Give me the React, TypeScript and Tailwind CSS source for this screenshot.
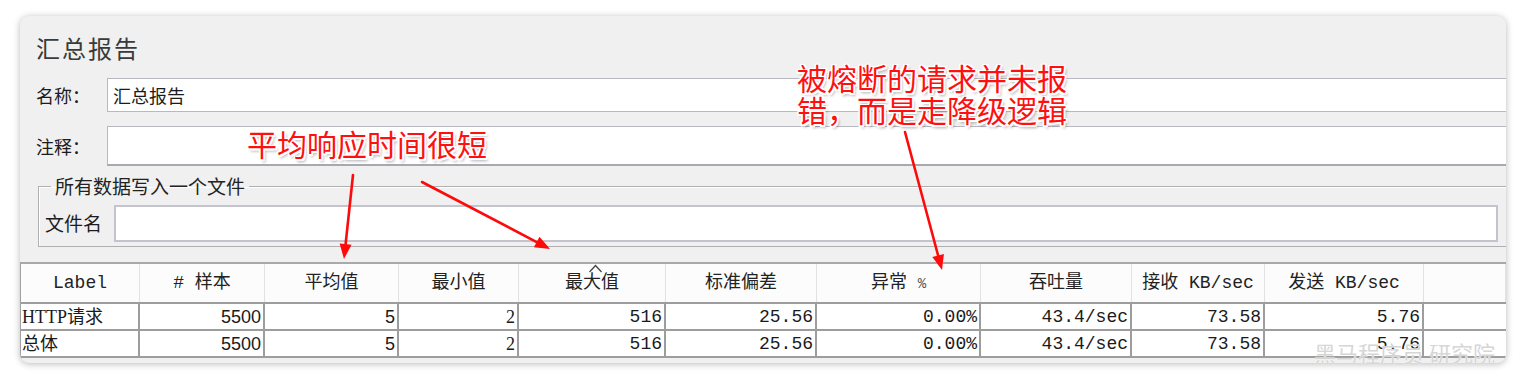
import React from "react";

type Pt = [number, number];

function Arrow({ from, to }: { from: Pt; to: Pt }) {
  const [x1, y1] = from;
  const [x2, y2] = to;
  const dx = x2 - x1;
  const dy = y2 - y1;
  const len = Math.sqrt(dx * dx + dy * dy);
  const ux = dx / len;
  const uy = dy / len;
  const hl = 15;
  const hw = 6;
  const bx = x2 - ux * hl;
  const by = y2 - uy * hl;
  const p1 = `${bx - uy * hw},${by + ux * hw}`;
  const p2 = `${bx + uy * hw},${by - ux * hw}`;
  return (
    <g>
      <line x1={x1} y1={y1} x2={bx} y2={by} stroke="#ff0a0a" strokeWidth={2.6} strokeLinecap="round" />
      <polygon points={`${x2},${y2} ${p1} ${p2}`} fill="#ff0a0a" />
    </g>
  );
}

const headers = ["Label", "# 样本", "平均值", "最小值", "最大值", "标准偏差", "异常 %", "吞吐量", "接收 KB/sec", "发送 KB/sec", ""];

const rows = [
  ["HTTP请求", "5500", "5", "2", "516", "25.56", "0.00%", "43.4/sec", "73.58", "5.76", ""],
  ["总体", "5500", "5", "2", "516", "25.56", "0.00%", "43.4/sec", "73.58", "5.76", ""],
];

const cellFont = [
  "font-['Liberation_Serif','Noto_Sans_CJK_SC',serif]",
  "font-['Liberation_Sans','Noto_Sans_CJK_SC',sans-serif]",
  "font-['Liberation_Sans','Noto_Sans_CJK_SC',sans-serif]",
  "font-['Liberation_Serif','Noto_Sans_CJK_SC',serif]",
  "font-['Liberation_Mono',monospace]",
  "font-['Liberation_Mono',monospace]",
  "font-['Liberation_Mono',monospace]",
  "font-['Liberation_Mono',monospace]",
  "font-['Liberation_Mono',monospace]",
  "font-['Liberation_Mono',monospace]",
  "",
];

const annot =
  "text-[30px] leading-[32px] text-[#ff1010] font-['Noto_Sans_CJK_SC',sans-serif] [text-shadow:1.5px_0_0_#fff,-1.5px_0_0_#fff,0_1.5px_0_#fff,0_-1.5px_0_#fff,1.5px_1.5px_0_#fff,-1.5px_-1.5px_0_#fff,1.5px_-1.5px_0_#fff,-1.5px_1.5px_0_#fff,2px_3px_3px_rgba(0,0,0,0.35)]";

export default function App() {
  return (
    <div className="relative w-[1524px] h-[384px] bg-white overflow-hidden font-['Noto_Sans_CJK_SC',sans-serif] text-[#1c1c1c]">
      <div className="pt-[16px] pl-[20px]">
        <div className="w-[1486px] h-[347px] rounded-[9px] bg-[#f0f0f0] shadow-[0_1px_7px_rgba(0,0,0,0.28)] overflow-hidden flex flex-col">
          <div className="pt-[19px] pl-[16px] text-[24px] leading-[26px] tracking-[2px] text-[#3a3a3a]">汇总报告</div>

          <div className="mt-[17px] flex items-center h-[34px]">
            <div className="w-[87px] pl-[16px] text-[18px]">名称：</div>
            <div className="flex-1 h-full bg-white border border-r-0 border-[#b8b8c0] flex items-center pl-[5px] text-[18px]">汇总报告</div>
          </div>

          <div className="mt-[14px] flex items-center h-[40px]">
            <div className="w-[87px] pl-[16px] text-[18px]">注释：</div>
            <div className="flex-1 h-full bg-white border border-r-0 border-[#b8b8c0] border-b-2 border-b-[#a8a8b0]"></div>
          </div>

          <fieldset className="mt-[8px] ml-[18px] border border-r-0 border-[#b0b0b0] shadow-[inset_1px_1px_0_#fff] pl-[6px] pr-[8px] pb-[4px]">
            <legend className="ml-[6px] px-[4px] text-[19px] leading-[24px] text-[#222]">所有数据写入一个文件</legend>
            <div className="mt-[7px] flex items-center h-[37px]">
              <div className="w-[69px] text-[19px]">文件名</div>
              <div className="flex-1 h-full bg-white border-2 border-[#c4c4cc]"></div>
            </div>
          </fieldset>

          <div className="mt-[15px] border-t-2 border-[#a9a9a9] border-l border-l-[#a0a0a0]">
            <div className="grid grid-cols-[119px_125px_134px_120px_147px_151px_164px_151px_133px_159px_82px] h-[38px] bg-[#fcfcfc]">
              {headers.map((h, i) => (
                <div
                  key={i}
                  className="relative flex items-center justify-center border-r border-[#e2e2e2] text-[18px] text-[#222] font-['Liberation_Mono','Noto_Sans_CJK_SC',monospace]"
                >
                  {h === "异常 %" ? (
                    <span>
                      异常 <span className="text-[14px] text-[#555]">%</span>
                    </span>
                  ) : (
                    h
                  )}
                  {i === 4 && (
                    <svg className="absolute left-[69px] top-[0px]" width="15" height="9" viewBox="0 0 15 9">
                      <path d="M1.5 8 L7.5 1.5 L13.5 8" fill="none" stroke="#444" strokeWidth="1.3" />
                    </svg>
                  )}
                </div>
              ))}
            </div>
            {rows.map((r, ri) => (
              <div
                key={ri}
                className="grid grid-cols-[119px_125px_134px_120px_147px_151px_164px_151px_133px_159px_82px] h-[27px] bg-white border-t-2 border-[#9d9d9d]"
              >
                {r.map((c, ci) => (
                  <div
                    key={ci}
                    className={`flex items-center text-[18px] leading-[20px] text-[#1a1a1a] ${
                      ci === 0 ? "justify-start pl-[1px]" : "justify-end pr-[2px]"
                    } ${ci < 10 ? "border-r-2 border-[#9d9d9d]" : ""} ${cellFont[ci]}`}
                  >
                    {c}
                  </div>
                ))}
              </div>
            ))}
            <div className="h-[2px] bg-[#9d9d9d]"></div>
          </div>
        </div>
      </div>

      <div className={`absolute left-[247px] top-[127px] ${annot}`}>平均响应时间很短</div>
      <div className={`absolute left-[797px] top-[61px] ${annot}`}>
        <div>被熔断的请求并未报</div>
        <div>错，而是走降级逻辑</div>
      </div>

      <svg className="absolute left-0 top-0 pointer-events-none" width="1524" height="384" viewBox="0 0 1524 384">
        <Arrow from={[353, 175]} to={[344, 259]} />
        <Arrow from={[422, 182]} to={[550, 249]} />
        <Arrow from={[905, 132]} to={[942, 270]} />
      </svg>

      <div className="absolute left-[1314px] top-[339px] text-[22px] leading-[26px] text-[#d6d6d6] font-['Noto_Sans_CJK_SC',sans-serif] [text-shadow:0_0_1px_#fff]">
        黑马程序员 研究院
      </div>
    </div>
  );
}
